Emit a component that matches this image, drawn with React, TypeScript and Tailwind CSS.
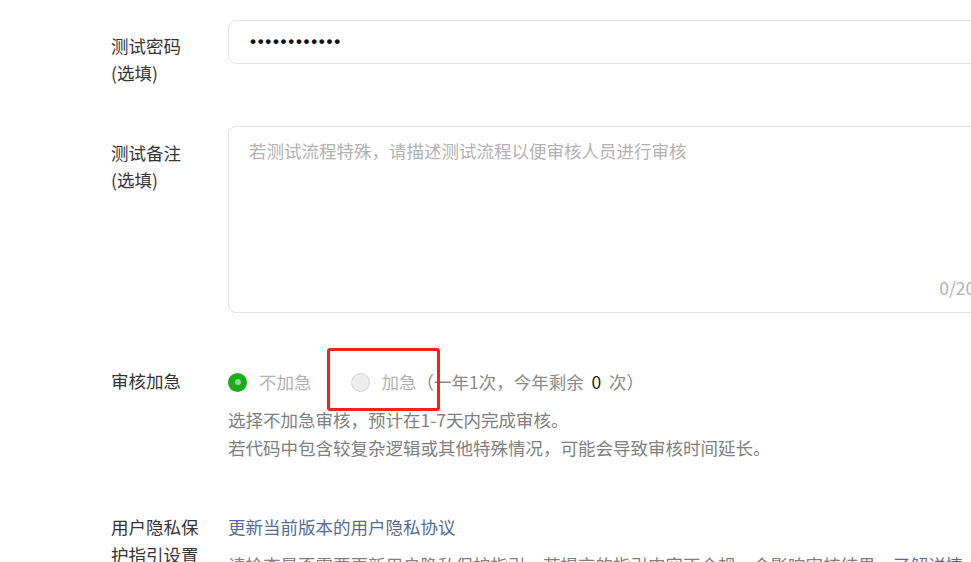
import React from 'react';

const font = { fontFamily: '"Noto Sans CJK SC", "Liberation Sans", sans-serif' };

const Label = ({ lines, className = '' }: { lines: string[]; className?: string }) => (
  <div className={`w-[117px] shrink-0 text-[17.5px] leading-[27px] text-[#353535] ${className}`}>
    {lines.map((l) => (
      <div key={l}>{l}</div>
    ))}
  </div>
);

const Radio = ({ checked, text }: { checked: boolean; text: React.ReactNode }) => (
  <div className="flex items-center">
    {checked ? (
      <span className="flex h-[19px] w-[19px] items-center justify-center rounded-full bg-[#1aad19]">
        <span className="h-[6px] w-[6px] rounded-full bg-[#8fd68e]" />
      </span>
    ) : (
      <span className="h-[19px] w-[19px] rounded-full border border-[#d4d4d4] bg-[#ededed]" />
    )}
    <span className="ml-[12px] text-[17.5px] text-[#b2b2b2]">{text}</span>
  </div>
);

export default function App() {
  return (
    <div className="relative h-[562px] w-[971px] overflow-hidden bg-white" style={font}>
      <div className="flex flex-col pl-[111px]">
        {/* test password */}
        <div className="mt-[20px] flex items-start">
          <Label lines={['测试密码', '(选填)']} className="pt-[12px]" />
          <div className="flex h-[44px] w-[774px] shrink-0 items-center rounded-[8px] border border-[#e3e3e3] pl-[21px]">
            <span
              className="text-[17px] font-bold tracking-[1.7px] text-[#111]"
              style={{ fontFamily: '"Liberation Sans", sans-serif' }}
            >
              ••••••••••••
            </span>
          </div>
        </div>

        {/* test notes */}
        <div className="mt-[40px] flex items-start">
          <Label lines={['测试备注', '(选填)']} className="pt-[13px]" />
          <div className="flex h-[187px] w-[774px] shrink-0 flex-col justify-between rounded-[8px] border border-[#e3e3e3] pb-[11px] pl-[20px] pr-[16px] pt-[10px]">
            <div className="text-[17.5px] leading-[27px] text-[#b2b2b2]">
              若测试流程特殊，请描述测试流程以便审核人员进行审核
            </div>
            <div className="self-end text-[17.5px] leading-[27px] text-[#b2b2b2]">0/200</div>
          </div>
        </div>

        {/* expedite */}
        <div className="mt-[54px] flex items-start">
          <Label lines={['审核加急']} className="leading-[28px]" />
          <div className="flex flex-col">
            <div className="flex h-[28px] items-center pt-[2px]">
              <Radio checked text="不加急" />
              <div className="ml-[39px]">
                <Radio
                  checked={false}
                  text={
                    <>
                      加急
                      <span className="text-[#8a8a8a]">
                        （一年1次，今年剩余&nbsp;&nbsp;<span className="text-[#222]">0</span>&nbsp;&nbsp;次）
                      </span>
                    </>
                  }
                />
              </div>
            </div>
            <div className="mt-[11px] text-[17.5px] leading-[28px] text-[#808080]">
              <div>选择不加急审核，预计在1-7天内完成审核。</div>
              <div>若代码中包含较复杂逻辑或其他特殊情况，可能会导致审核时间延长。</div>
            </div>
          </div>
        </div>

        {/* privacy */}
        <div className="mt-[51px] flex items-start">
          <Label lines={['用户隐私保', '护指引设置']} className="leading-[28px]" />
          <div className="flex flex-col text-[17.5px] leading-[28px]">
            <a className="text-[#576b95]">更新当前版本的用户隐私协议</a>
            <div className="mt-[10px] whitespace-nowrap text-[#808080]">
              请检查是否需要更新用户隐私保护指引，若提交的指引内容不合规，会影响审核结果。
              <a className="text-[#576b95]">了解详情</a>
            </div>
          </div>
        </div>
      </div>

      {/* annotation box */}
      <div className="absolute left-[327px] top-[348px] h-[63px] w-[113px] rounded-[3px] border-[3px] border-[#f5221b]" />
    </div>
  );
}
